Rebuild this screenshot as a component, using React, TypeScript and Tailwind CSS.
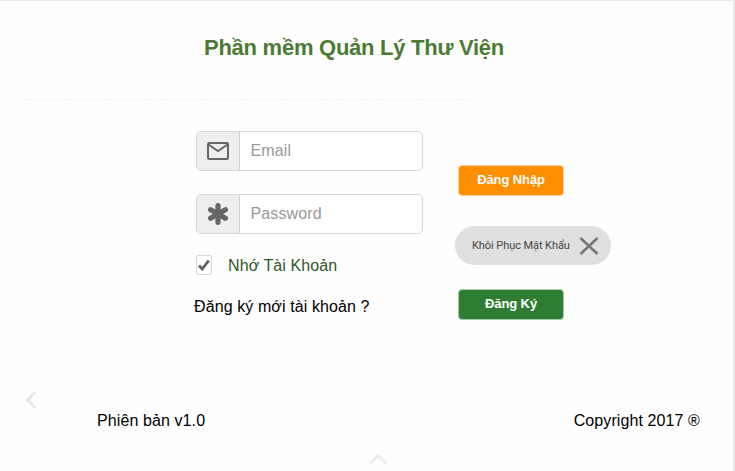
import type { ReactNode } from "react";

function Field({ icon, placeholder, type }: { icon: ReactNode; placeholder: string; type: string }) {
  return (
    <label className="flex h-10 w-[227px] overflow-hidden rounded-[5px] border border-[#d6d6d6] bg-white">
      <span className="flex w-[43px] shrink-0 items-center justify-center border-r border-[#d2d2d2] bg-[#eeeeee]">
        {icon}
      </span>
      <input
        type={type}
        placeholder={placeholder}
        className="min-w-0 flex-1 pl-[10.5px] text-base tracking-[0.12px] outline-none placeholder:text-[#999999]"
      />
    </label>
  );
}

function MailIcon() {
  return (
    <svg width="22" height="18" viewBox="0 0 22 18" fill="none" stroke="#666666" strokeWidth="2">
      <rect x="1" y="1" width="20" height="16" rx="1.3" />
      <path d="M1.5 2.5 11 9l9.500-6.500" />
    </svg>
  );
}

function AsteriskIcon() {
  return (
    <svg width="22" height="22" viewBox="0 0 22 22" stroke="#666666" strokeWidth="5.200" strokeLinecap="round">
      <path d="M11 2.700v16.600M3.600 6.800l14.800 8.400M3.600 15.200l14.800-8.400" />
    </svg>
  );
}

export default function App() {
  return (
    <main className="flex h-[471px] w-[735px] flex-col overflow-hidden border-t border-r-2 border-t-[#ebebeb] border-r-[#ebebeb] bg-[#fefefe] font-['Liberation_Sans',Arial,sans-serif] text-base leading-6 tracking-[0.1px] whitespace-nowrap text-black">
      <h1 className="mt-[33px] ml-[204px] text-[22px] leading-7 font-bold tracking-[-0.26px] text-[#4b7a33]">
        Phần mềm Quản Lý Thư Viện
      </h1>
      <hr className="mt-[37px] ml-6 w-[450px] border-dashed border-[#f0f0f0]" />

      <div className="mt-[31px] flex h-[200px] pl-[196px]">
        <form className="w-[259px] shrink-0">
          <Field icon={<MailIcon />} placeholder="Email" type="email" />
          <div className="h-[23px]" />
          <Field icon={<AsteriskIcon />} placeholder="Password" type="password" />
          <div className="mt-5 flex items-center text-[#2f5626]">
            <span className="mr-4 mb-0.5 flex h-5 w-4 items-center justify-center rounded-[2px] border border-[#d8d8d8] bg-white">
              <svg width="12" height="12" viewBox="0 0 12 12" fill="none" stroke="#606060" strokeWidth="2.800">
                <path d="m1 6.500 3.200 3.500L10.800 1.500" />
              </svg>
            </span>
            <span>Nhớ Tài Khoản</span>
          </div>
          <p className="mt-[17px] -ml-0.5">Đăng ký mới tài khoản ?</p>
        </form>

        <div className="flex flex-col items-start pt-[34px]">
          <button className="ml-[3px] h-[31px] w-[106px] rounded-[4px] border border-[#ffcf96] bg-[#ff8f00] pb-0.5 text-[13px] font-bold tracking-[-0.1px] text-white">
            Đăng Nhập
          </button>
          <div className="mt-[30px] flex h-[39px] w-[156px] items-center rounded-full bg-[#e0e0e0] pl-[17px] font-[Roboto,sans-serif] text-[11px] tracking-[-0.07px] text-[#444444]">
            <span className="w-[107px]">Khôi Phục Mật Khẩu</span>
            <svg width="20" height="18" viewBox="0 0 20 18" fill="none" stroke="#777777" strokeWidth="2.600">
              <path d="m1.500 1 17 16M18.500 1l-17 16" />
            </svg>
          </div>
          <button className="mt-6 ml-[3px] h-[31px] w-[106px] rounded-[4px] border border-[#a9cbab] bg-[#2e7d32] pb-0.5 text-[13px] font-bold tracking-[-0.1px] text-white">
            Đăng Ký
          </button>
        </div>
      </div>

      <div className="mt-[60px] flex h-[18px] pl-[25px]">
        <svg width="12" height="18" viewBox="0 0 12 18" fill="none" stroke="#e9e9e9" strokeWidth="3">
          <path d="M10.500 1 2.500 9l8 8" />
        </svg>
      </div>
      <footer className="flex justify-between pr-[33px] pl-[97px]">
        <span>Phiên bản v1.0</span>
        <span>Copyright 2017 ®</span>
      </footer>
      <div className="mt-5 flex pl-[369px]">
        <svg width="18" height="12" viewBox="0 0 18 12" fill="none" stroke="#ebebeb" strokeWidth="3">
          <path d="m1 10.500 8-8 8 8" />
        </svg>
      </div>
    </main>
  );
}
